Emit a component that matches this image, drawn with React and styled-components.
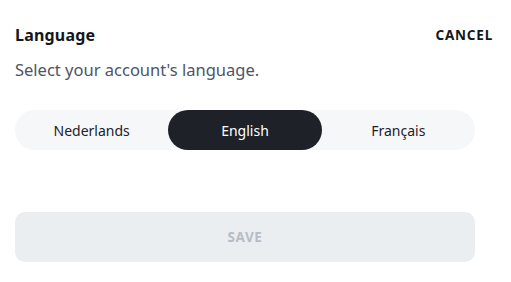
import React, { useState } from "react";
import styled, { createGlobalStyle } from "styled-components";

const Global = createGlobalStyle`
  html, body { margin: 0; padding: 0; background: #ffffff; }
  body { font-family: "Noto Sans", "Open Sans", sans-serif; }
  * { box-sizing: border-box; }
`;

const Panel = styled.div`
  width: 511px;
  height: 282px;
  padding: 24px 36px 0 15px;
  display: flex;
  flex-direction: column;
`;

const Header = styled.div`
  display: flex;
  justify-content: space-between;
  align-items: center;
  width: 478px;
  height: 22px;
`;

const Title = styled.h2`
  margin: 0;
  font-size: 16px;
  font-weight: 700;
  letter-spacing: 0.2px;
  color: #16171c;
`;

const Cancel = styled.button`
  border: none;
  background: none;
  padding: 0;
  font-family: "Noto Sans", sans-serif;
  font-size: 13.5px;
  font-weight: 700;
  letter-spacing: 0.8px;
  color: #16171c;
  cursor: pointer;
`;

const Subtitle = styled.p`
  margin: 13px 0 0;
  font-size: 16.5px;
  color: #4d5566;
  line-height: 22px;
`;

const Segmented = styled.div`
  margin-top: 29px;
  width: 460px;
  height: 40px;
  border-radius: 20px;
  background: #f6f7f9;
  display: grid;
  grid-template-columns: repeat(3, 1fr);
`;

const Segment = styled.button`
  border: none;
  border-radius: 20px;
  font-family: "Noto Sans", sans-serif;
  font-size: 14px;
  background: ${(p) => (p.$active ? "#1e2128" : "transparent")};
  color: ${(p) => (p.$active ? "#ffffff" : "#1e2128")};
  cursor: pointer;
`;

const Save = styled.button`
  margin-top: 62px;
  width: 460px;
  height: 50px;
  border: none;
  border-radius: 10px;
  background: #ebeef1;
  color: #b6bcc7;
  font-family: "Noto Sans", sans-serif;
  font-size: 13.5px;
  font-weight: 700;
  letter-spacing: 0.6px;
`;

const langs = ["Nederlands", "English", "Français"];

export default function App() {
  const [lang, setLang] = useState("English");
  return (
    <>
      <Global />
      <Panel>
        <Header>
          <Title>Language</Title>
          <Cancel>CANCEL</Cancel>
        </Header>
        <Subtitle>Select your account's language.</Subtitle>
        <Segmented>
          {langs.map((l) => (
            <Segment key={l} $active={l === lang} onClick={() => setLang(l)}>
              {l}
            </Segment>
          ))}
        </Segmented>
        <Save disabled>SAVE</Save>
      </Panel>
    </>
  );
}
